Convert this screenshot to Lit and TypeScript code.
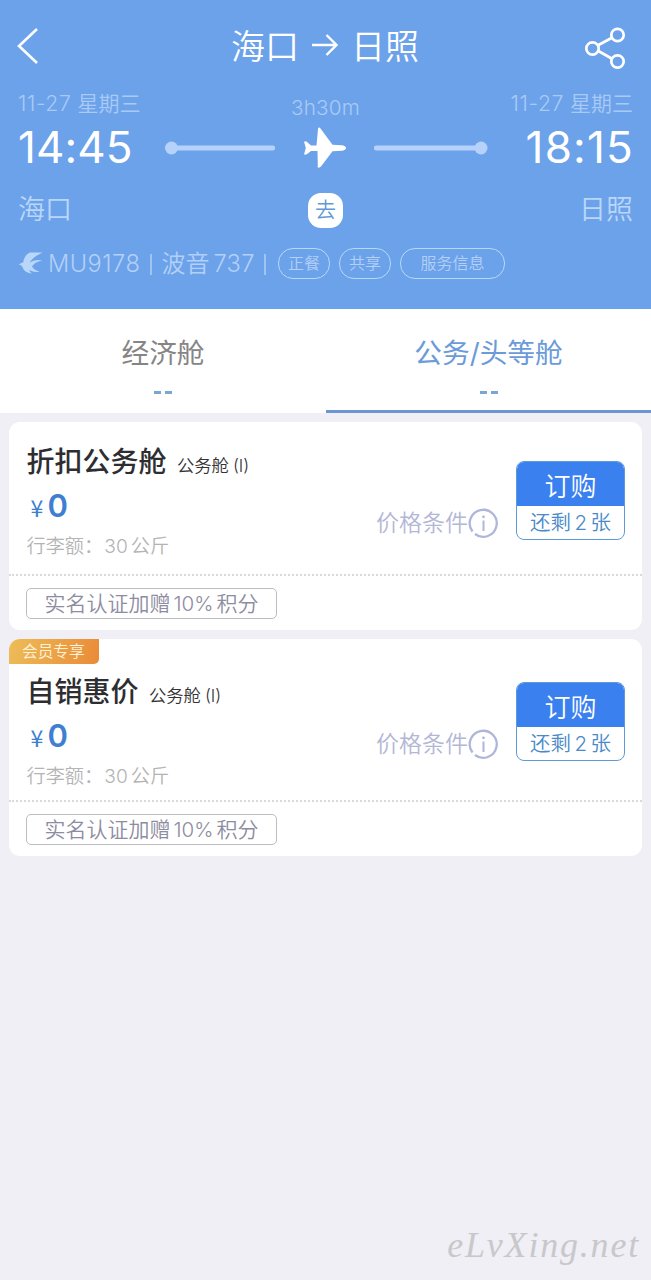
import { LitElement, html, css } from "lit";
import { customElement, property } from "lit/decorators.js";

const base = css`
  * { box-sizing: border-box; }
  :host {
    display: block;
    font-family: Inter, "Noto Sans CJK SC", sans-serif;
    white-space: nowrap;
  }
  .row { display: flex; align-items: baseline; }
`;

@customElement("flight-header")
class FlightHeader extends LitElement {
  static styles = [base, css`
    :host { height: 309px; background: #6ca2ea; color: #fff; }
    svg { display: block; flex: none; }
    .nav { display: flex; justify-content: space-between; height: 90px; padding: 24px 24px 0 16px; }
    .back { margin-top: 3px; }
    .share { margin-top: 2px; }
    .title { display: flex; align-items: center; height: 40px; font-size: 34px; font-weight: 350; line-height: 40px; margin-left: 26px; }
    .title span { padding-top: 5px; }
    .title svg { margin: 1px 13px 0 12px; }
    .trip { display: grid; grid-template-columns: 136px 1fr 136px; padding: 0 18px; height: 150px; }
    .end { display: flex; flex-direction: column; }
    .right { align-items: flex-end; }
    .date { height: 24px; line-height: 26px; font-size: 21.2px; font-weight: 350; color: #a9caf6; }
    .date span { letter-spacing: 0.6px; }
    .date b { font-weight: 350; font-size: 21px; margin-left: 6px; }
    .time { height: 56px; line-height: 56px; margin-top: 5px; font-size: 44px; letter-spacing: 0.1px; }
    .right .time { letter-spacing: 1.2px; margin-right: -1px; }
    .city { height: 34px; line-height: 38px; margin-top: 16px; font-size: 27px; font-weight: 350; color: #bad7f9; }
    .mid { display: flex; flex-direction: column; align-items: center; padding-top: 5px; }
    .dur { height: 24px; line-height: 25px; font-size: 20.7px; letter-spacing: 0.2px; font-weight: 350; color: #a9caf6; }
    .track { display: flex; align-items: center; height: 46px; margin-top: 6px; }
    .badge { width: 35px; height: 35px; margin-top: 22px; border-radius: 13px; background: #fff; color: #6398d6; font-size: 21px; font-weight: 350; line-height: 34px; text-align: center; }
    .info { display: flex; align-items: center; height: 46px; padding-left: 18px; font-size: 23.6px; font-weight: 350; color: #b3d0f7; }
    .info svg { margin-right: 4px; }
    .no { width: 93px; padding-top: 1px; letter-spacing: 0.5px; }
    .sep { width: 4px; height: 21px; border-left: 2px solid #9fc4f3; margin: 2px 8px 0 8.5px; }
    .plane { font-size: 24px; width: 52px; line-height: 34px; padding-top: 1px; }
    .num { width: 42px; padding-top: 1px; letter-spacing: 0.3px; }
    .pill { height: 31px; border: 1.5px solid #b4daf6; border-radius: 15px; font-size: 16px; line-height: 29px; text-align: center; margin-right: 9px; }
    .s { width: 52px; }
    .l { width: 105px; }
    .first { margin-left: 2px; }
  `];
  render() {
    return html`
      <div class="nav">
        <svg class="back" width="24" height="40" viewBox="0 0 24 40" fill="none" stroke="#fff" stroke-width="2.6"><path d="M21 2 3 19 21 36" /></svg>
        <div class="title"><span>海口</span>
          <svg width="27" height="24" viewBox="0 0 27 24" fill="none" stroke="#fff" stroke-width="2.4"><path d="M1 12H25M15.500 2 25.500 12 15.500 22" /></svg>
          <span>日照</span></div>
        <svg class="share" width="43" height="44" viewBox="0 0 43 44" fill="none" stroke="#fff" stroke-width="2.7">
          <circle cx="8.5" cy="22.5" r="6.2" /><circle cx="33.5" cy="9" r="6.2" /><circle cx="33.5" cy="35.5" r="6.2" />
          <path d="M13.500 19.500 28.500 11.500M13.500 24.500 28.500 33" />
        </svg>
      </div>
      <div class="trip">
        <div class="end">
          <div class="date"><span>11-27</span><b>星期三</b></div><div class="time">14:45</div><div class="city">海口</div>
        </div>
        <div class="mid">
          <div class="dur">3h30m</div>
          <div class="track">
            <svg width="324" height="46" viewBox="0 0 324 46">
              <g fill="#b7d2fa"><circle cx="7.500" cy="23" r="6.5" /><rect x="8" y="20.5" width="103" height="5" rx="2" />
              <rect x="210" y="20.5" width="106" height="5" rx="2" /><circle cx="317" cy="23" r="6.5" /></g>
              <path fill="#fff" d="M140 16.500h2.500l4.500 4h5.500L154 4c0-1.800 1.500-2.200 2.500-.5L168.500 19.700l9 .5c2.800.2 4.500 1.400 4.500 2.800s-1.700 2.600-4.500 2.800l-9 .5L157 41.500c-1.500 1.800-4 1.500-3.200-.8L153.500 26h-6.500l-4.500 3.500H140l1.800-6.500z" />
            </svg>
          </div>
          <div class="badge">去</div>
        </div>
        <div class="end right">
          <div class="date"><span>11-27</span><b>星期三</b></div><div class="time">18:15</div><div class="city">日照</div>
        </div>
      </div>
      <div class="info">
        <svg width="26" height="22" viewBox="0 0 26 22" fill="#b9d7f9">
          <path d="M24.500 .5H12C8.500 2 6.500 5 5.500 8.500V10L.5 12.500c2 .3 3 1 4 2.500C6 19 8.500 21 14 21.500c-1.500-1-2.300-2.200-2.500-3.500 3 1.700 6 2.500 10 1.700-3.500-1-6-2.500-7.500-5.200C16 11.500 19 9.500 24.500 8.500 19.500 7.300 15.500 8 11.500 10.500 14.500 6 19 3 24.500 .5Z" />
        </svg>
        <span class="no">MU9178</span><i class="sep"></i><span class="plane">波音</span><span class="num">737</span><i class="sep"></i>
        <span class="pill s first">正餐</span><span class="pill s">共享</span><span class="pill l">服务信息</span>
      </div>`;
  }
}

@customElement("cabin-tabs")
class CabinTabs extends LitElement {
  static styles = [base, css`
    :host { display: grid; grid-template-columns: 326px 1fr; height: 104px; background: #fff; }
    .tab { display: flex; flex-direction: column; align-items: center; padding-top: 24px; font-size: 27.7px; line-height: 40px; color: #858585; }
    .on { color: #6b9bd8; border-bottom: 3px solid #6b96d2; }
    .price { display: flex; gap: 4px; margin-top: 18px; }
    .dash { width: 7px; height: 2.5px; background: #7ba6d2; }
  `];
  render() {
    return html`
      <div class="tab"><span>经济舱</span><div class="price"><i class="dash"></i><i class="dash"></i></div></div>
      <div class="tab on"><span>公务/头等舱</span><div class="price"><i class="dash"></i><i class="dash"></i></div></div>`;
  }
}

@customElement("fare-card")
class FareCard extends LitElement {
  @property() name = "";
  @property({ type: Boolean }) member = false;
  static styles = [base, css`
    .card { position: relative; background: #fff; border-radius: 11px; overflow: hidden; }
    .top { display: flex; height: 154px; padding: 20px 17px 0 17.5px; border-bottom: 2px dotted #d9d9dc; }
    .member .top { height: 163px; padding-top: 33px; }
    .flag { position: absolute; left: 0; top: 0; width: 90px; height: 25px; border-radius: 0 0 5px 0; background: linear-gradient(105deg, #edbd58, #ea8a38); color: #fff2d8; font-size: 15.7px; font-weight: 350; line-height: 25px; padding-left: 13px; }
    .main { flex: 1; }
    .name { height: 40px; line-height: 40px; font-size: 28px; font-weight: 500; color: #2e2e32; }
    .name span { font-size: 17.3px; font-weight: 350; color: #333; margin-left: 10.5px; }
    .name i { font-style: normal; font-size: 17px; font-weight: 350; margin-left: 4px; color: #333; }
    .price { height: 40px; line-height: 40px; margin-top: 4px; padding-left: 4px; color: #3f7fd2; }
    .yen { font-family: "Noto Sans CJK SC", sans-serif; font-size: 23px; width: 17px; font-weight: 400; }
    .zero { font-size: 31px; font-weight: 600; }
    .lug { height: 30px; line-height: 30px; margin-top: 5px; font-size: 19.2px; font-weight: 350; color: #b4b4b4; }
    .lug .n { margin: 0 3px 0 1px; }
    .cond { display: flex; align-items: center; height: 32px; margin: 65px 17px 0 0; font-size: 23px; line-height: 30px; font-weight: 350; color: #b3b7d6; }
    .member .cond { margin-top: 56px; }
    .buy { width: 109px; height: 79px; margin-top: 19px; border: 1.5px solid #5f9ad8; border-radius: 8px; overflow: hidden; text-align: center; }
    .member .buy { margin-top: 10px; }
    .go { height: 44px; line-height: 49px; background: #3b80ef; color: #fff; font-size: 26px; font-weight: 350; }
    .left { display: flex; justify-content: center; align-items: baseline; line-height: 34px; font-size: 20.5px; font-weight: 350; color: #4a8ac8; }
    .left b { font-weight: 350; margin: 0 3.5px; }
    .bottom { height: 54px; padding: 12px 0 0 17px; }
    .tag { display: flex; justify-content: center; align-items: baseline; width: 251px; height: 31px; line-height: 29px; border: 1.5px solid #bcbcc2; border-radius: 5px; font-size: 21px; font-weight: 350; color: #8d8ca0; }
    .tag b { font-weight: 350; font-size: 20.5px; margin: 0 3px; }
  `];
  render() {
    return html`<div class="card ${this.member ? "member" : ""}">
      ${this.member ? html`<div class="flag">会员专享</div>` : ""}
      <div class="top">
        <div class="main">
          <div class="name row">${this.name}<span>公务舱</span><i>(I)</i></div>
          <div class="price row"><span class="yen">¥</span><span class="zero">0</span></div>
          <div class="lug row"><span>行李额：</span><span class="n">30</span><span>公斤</span></div>
        </div>
        <div class="cond">价格条件<svg width="31" height="31" viewBox="0 0 31 31" fill="none" stroke="#b0b6d9" stroke-width="2.3">
          <path d="M4.5 23.500A13.500 13.500 0 1 1 7 26" /><path d="M15.500 12.500v10.500" stroke-width="2" /><circle cx="15.500" cy="8.800" r="1.400" fill="#b0b6d9" stroke="none" /></svg></div>
        <div class="buy"><div class="go">订购</div><div class="left">还剩<b>2</b>张</div></div>
      </div>
      <div class="bottom"><div class="tag">实名认证加赠<b>10%</b>积分</div></div>
    </div>`;
  }
}

@customElement("app-root")
class AppRoot extends LitElement {
  static styles = [base, css`
    :host { display: flex; flex-direction: column; width: 651px; height: 1280px; background: #efeff5; overflow: hidden; }
    .list { display: flex; flex-direction: column; gap: 9px; padding: 9px 9px 0 9px; flex: 1; }
    .mark { align-self: flex-end; margin: 0 11px 10px 0; font: italic 36px/50px "Liberation Serif", serif; letter-spacing: 1.8px; color: #c8c8cb; }
  `];
  render() {
    return html`<flight-header></flight-header><cabin-tabs></cabin-tabs>
      <div class="list"><fare-card name="折扣公务舱"></fare-card><fare-card name="自销惠价" member></fare-card></div>
      <div class="mark">eLvXing.net</div>`;
  }
}
